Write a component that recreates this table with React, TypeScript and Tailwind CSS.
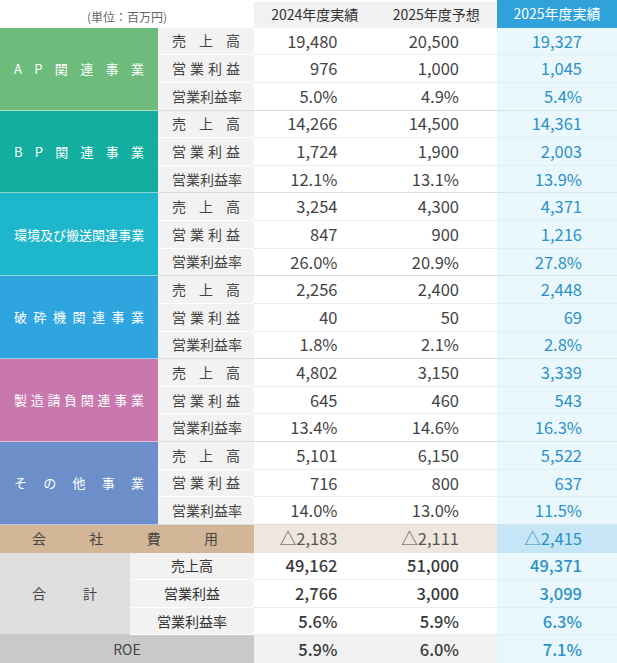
import React from 'react'

const FONT = { fontFamily: '"Noto Sans CJK JP", "Noto Sans", sans-serif' }

type Row = { label: string; a: string; b: string; c: string }
type Group = { name: string; bg: string; rows: Row[] }

const groups: Group[] = [
  {
    name: 'AP関連事業',
    bg: 'bg-[#6dbc7c]',
    rows: [
      { label: '売上高', a: '19,480', b: '20,500', c: '19,327' },
      { label: '営業利益', a: '976', b: '1,000', c: '1,045' },
      { label: '営業利益率', a: '5.0%', b: '4.9%', c: '5.4%' },
    ],
  },
  {
    name: 'BP関連事業',
    bg: 'bg-[#13ae9f]',
    rows: [
      { label: '売上高', a: '14,266', b: '14,500', c: '14,361' },
      { label: '営業利益', a: '1,724', b: '1,900', c: '2,003' },
      { label: '営業利益率', a: '12.1%', b: '13.1%', c: '13.9%' },
    ],
  },
  {
    name: '環境及び搬送関連事業',
    bg: 'bg-[#1eb6ca]',
    rows: [
      { label: '売上高', a: '3,254', b: '4,300', c: '4,371' },
      { label: '営業利益', a: '847', b: '900', c: '1,216' },
      { label: '営業利益率', a: '26.0%', b: '20.9%', c: '27.8%' },
    ],
  },
  {
    name: '破砕機関連事業',
    bg: 'bg-[#2fa5df]',
    rows: [
      { label: '売上高', a: '2,256', b: '2,400', c: '2,448' },
      { label: '営業利益', a: '40', b: '50', c: '69' },
      { label: '営業利益率', a: '1.8%', b: '2.1%', c: '2.8%' },
    ],
  },
  {
    name: '製造請負関連事業',
    bg: 'bg-[#c878ad]',
    rows: [
      { label: '売上高', a: '4,802', b: '3,150', c: '3,339' },
      { label: '営業利益', a: '645', b: '460', c: '543' },
      { label: '営業利益率', a: '13.4%', b: '14.6%', c: '16.3%' },
    ],
  },
  {
    name: 'その他事業',
    bg: 'bg-[#6c8fca]',
    rows: [
      { label: '売上高', a: '5,101', b: '6,150', c: '5,522' },
      { label: '営業利益', a: '716', b: '800', c: '637' },
      { label: '営業利益率', a: '14.0%', b: '13.0%', c: '11.5%' },
    ],
  },
]

const totals: Row[] = [
  { label: '売上高', a: '49,162', b: '51,000', c: '49,371' },
  { label: '営業利益', a: '2,766', b: '3,000', c: '3,099' },
  { label: '営業利益率', a: '5.6%', b: '5.9%', c: '6.3%' },
]

// spreads characters evenly across the cell
const Spread = ({ text, className }: { text: string; className?: string }) => (
  <div className={`flex justify-between ${className ?? ''}`}>
    {Array.from(text).map((ch, i) => (
      <span key={i}>{ch}</span>
    ))}
  </div>
)

export default function App() {
  return (
    <div
      className="w-[617px] h-[663px] bg-white grid grid-cols-[130px_28px_96px_121.5px_121.5px_120px] grid-rows-[repeat(24,27.625px)] text-[#3c3c3c]"
      style={FONT}
    >
      {/* Header */}
      <div className="col-span-3 flex items-end justify-center pb-[2px] text-[12px] text-[#666]">
        (単位：百万円)
      </div>
      <div className="mt-[2px] bg-[#f1f1f1] flex items-center justify-center text-[14px] text-[#333]">
        2024年度実績
      </div>
      <div className="mt-[2px] bg-[#f1f1f1] flex items-center justify-center text-[14px] text-[#333]">
        2025年度予想
      </div>
      <div className="bg-[#2fa2dc] flex items-center justify-center text-[14px] text-white">
        2025年度実績
      </div>

      {/* Segments */}
      {groups.map((g) => (
        <React.Fragment key={g.name}>
          <div
            className={`${g.bg} col-span-2 row-span-3 flex items-center px-[14px] border-b border-white/50 text-[13px] text-white`}
          >
            <Spread text={g.name} className="w-full" />
          </div>
          {g.rows.map((r, i) => {
            const last = i === g.rows.length - 1
            const line = last ? 'border-[#dcdcdc]' : 'border-[#ececec]'
            return (
              <React.Fragment key={r.label}>
                <div
                  className={`bg-[#f2f2f2] flex items-center px-[14px] border-b ${last ? 'border-[#dcdcdc]' : 'border-white'} text-[14px] text-[#444]`}
                >
                  <Spread text={r.label} className="w-full" />
                </div>
                <div className={`flex items-center justify-end pr-[38px] border-b ${line} text-[16.5px] text-[#444]`}>
                  {r.a}
                </div>
                <div className={`flex items-center justify-end pr-[38px] border-b ${line} text-[16.5px] text-[#444]`}>
                  {r.b}
                </div>
                <div
                  className={`bg-[#eaf7fd] flex items-center justify-end pr-[35px] border-b ${last ? 'border-[#cfe8f6]' : 'border-[#dcf0fa]'} text-[16.5px] text-[#2a92c7]`}
                >
                  {r.c}
                </div>
              </React.Fragment>
            )
          })}
        </React.Fragment>
      ))}

      {/* Corporate expenses */}
      <div className="col-span-3 bg-[#d3b697] flex items-center pl-[32px] pr-[36px] text-[14px] text-[#444]">
        <Spread text="会社費用" className="w-full" />
      </div>
      <div className="bg-[#efe6dd] flex items-center justify-end pr-[38px] text-[16.5px] text-[#555]">△2,183</div>
      <div className="bg-[#efe6dd] flex items-center justify-end pr-[38px] text-[16.5px] text-[#555]">△2,111</div>
      <div className="bg-[#c6e5f6] flex items-center justify-end pr-[35px] text-[16.5px] text-[#2a92c7]">△2,415</div>

      {/* Totals */}
      <div className="row-span-3 bg-[#dedede] flex items-center pl-[32px] pr-[33px] border-b border-[#d0d0d0] text-[14px] text-[#444]">
        <Spread text="合計" className="w-full" />
      </div>
      {totals.map((r) => (
        <React.Fragment key={r.label}>
          <div className="col-span-2 bg-[#f2f2f2] flex items-center justify-center border-b border-white text-[14px] text-[#333]">
            {r.label}
          </div>
          <div className="flex items-center justify-end pr-[38px] border-b border-[#ececec] text-[16.5px] font-medium text-[#3a3a3a]">
            {r.a}
          </div>
          <div className="flex items-center justify-end pr-[38px] border-b border-[#ececec] text-[16.5px] font-medium text-[#3a3a3a]">
            {r.b}
          </div>
          <div className="bg-[#eaf7fd] flex items-center justify-end pr-[35px] border-b border-[#dcf0fa] text-[16.5px] font-medium text-[#2a92c7]">
            {r.c}
          </div>
        </React.Fragment>
      ))}

      {/* ROE */}
      <div className="col-span-3 bg-[#c9c9c9] flex items-center justify-center text-[14px] text-[#444]">ROE</div>
      <div className="bg-[#f1f1f1] flex items-center justify-end pr-[38px] text-[16.5px] font-medium text-[#3a3a3a]">5.9%</div>
      <div className="bg-[#f1f1f1] flex items-center justify-end pr-[38px] text-[16.5px] font-medium text-[#3a3a3a]">6.0%</div>
      <div className="bg-[#e8f6fd] flex items-center justify-end pr-[35px] text-[16.5px] font-medium text-[#2a92c7]">7.1%</div>
    </div>
  )
}
